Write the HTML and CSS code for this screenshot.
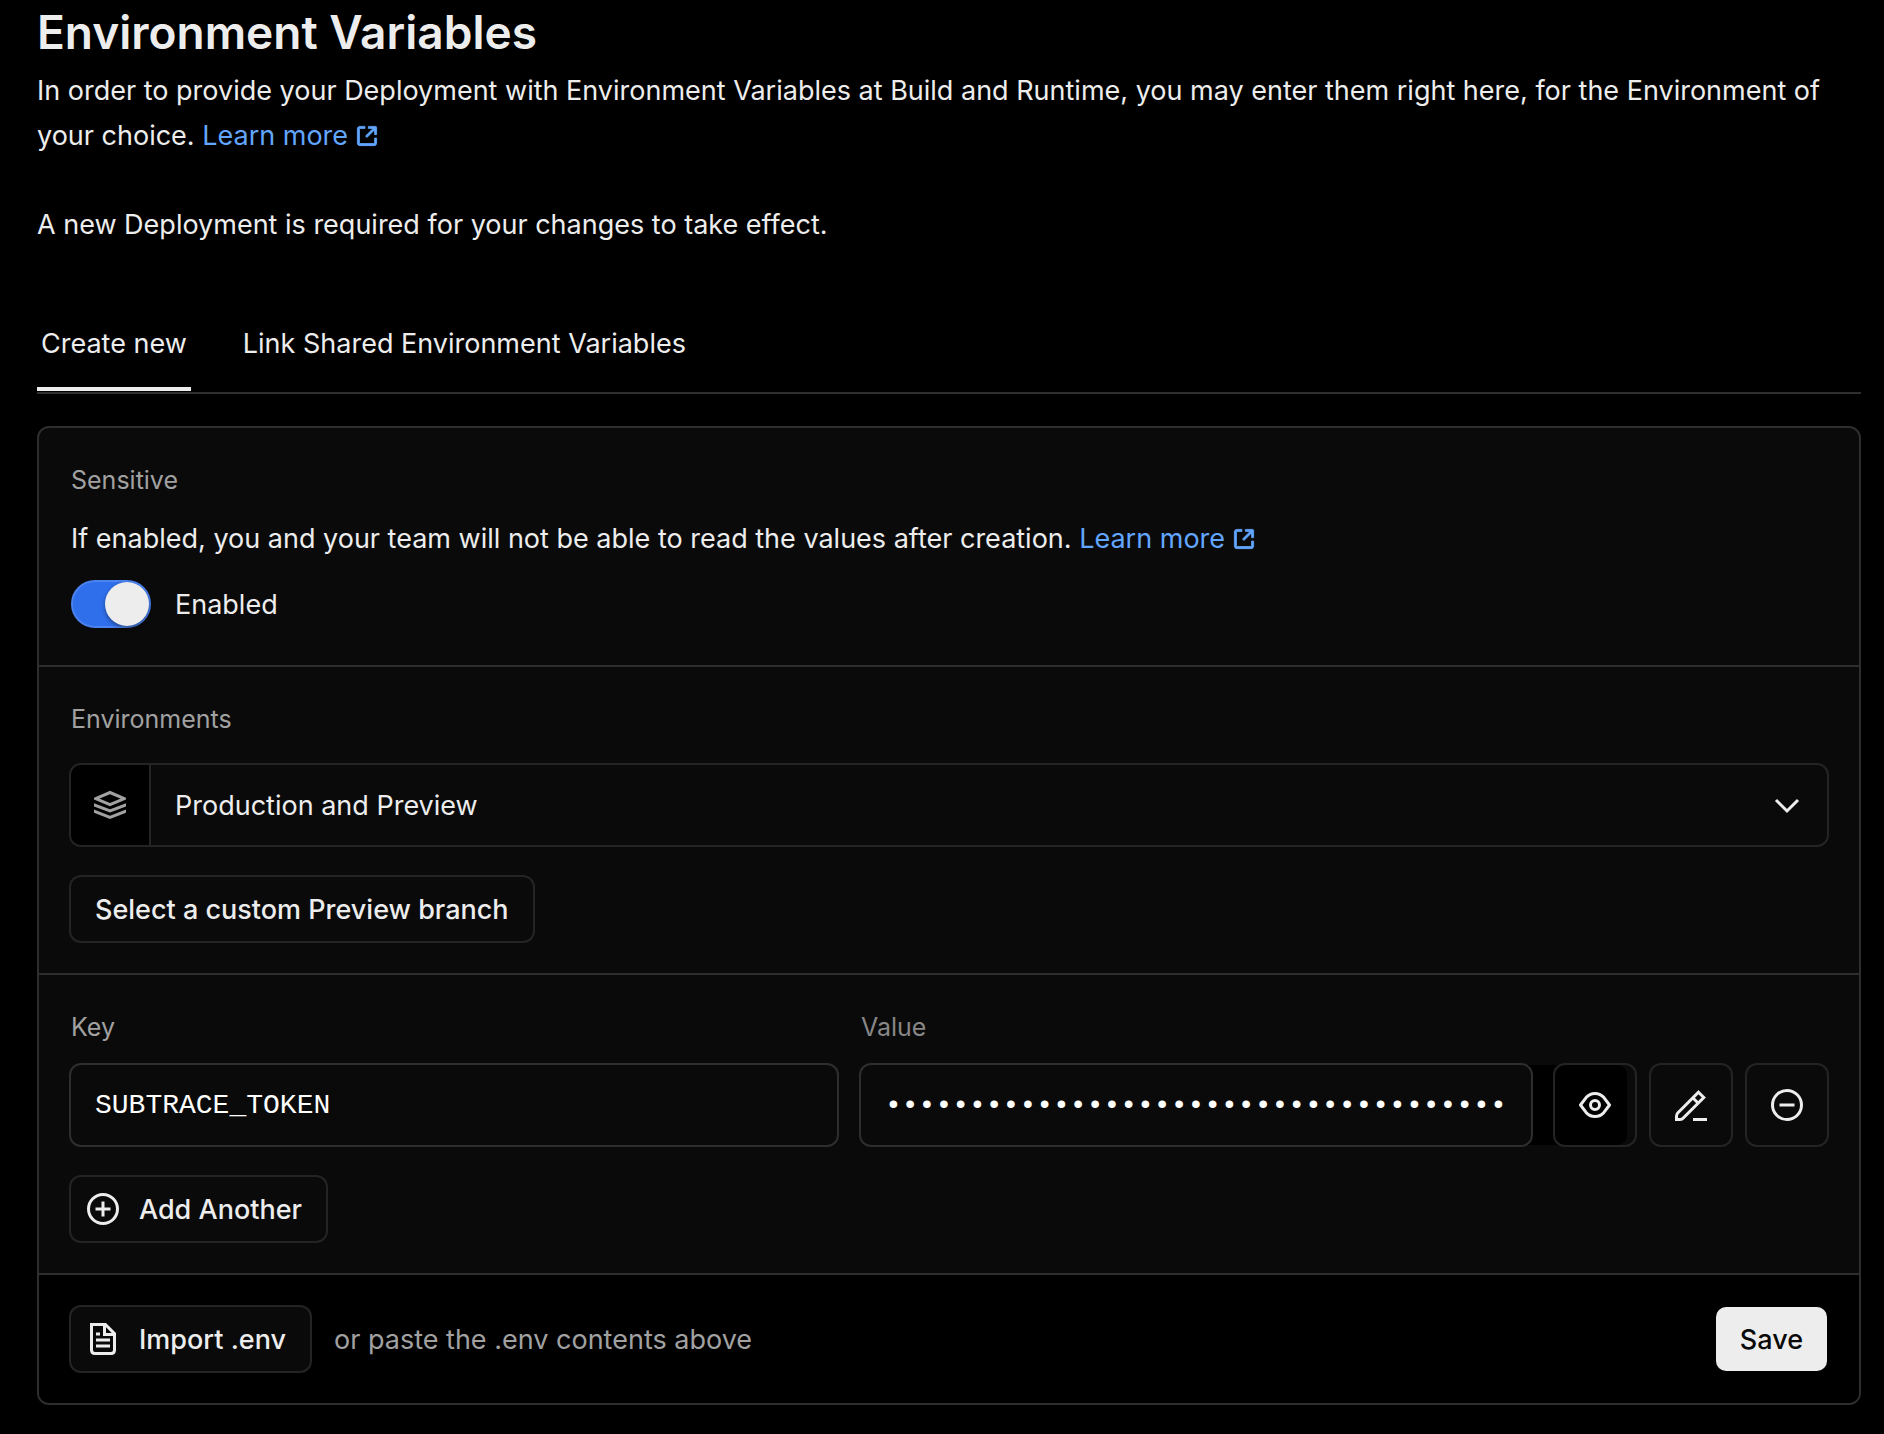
FILE: index.html
```html
<!DOCTYPE html>
<html lang="en">
<head>
<meta charset="utf-8">
<meta name="viewport" content="width=device-width, initial-scale=1">
<title>Environment Variables</title>
<link rel="stylesheet" href="styles.css">
</head>
<body>
<svg width="0" height="0" class="sprite" aria-hidden="true">
  <symbol id="external" viewBox="0 0 16 16"><path fill-rule="evenodd" clip-rule="evenodd" d="M13.5 10.25V13.25C13.5 13.3881 13.3881 13.5 13.25 13.5H2.75C2.61193 13.5 2.5 13.3881 2.5 13.25L2.5 2.75C2.5 2.61193 2.61193 2.5 2.75 2.5H5.75H6.5V1H5.75H2.75C1.7835 1 1 1.7835 1 2.75V13.25C1 14.2165 1.7835 15 2.75 15H13.25C14.2165 15 15 14.2165 15 13.25V10.25V9.5H13.5V10.25ZM9 1H9.75H14.2495C14.6637 1 14.9995 1.33579 14.9995 1.75V6.25V7H13.4995V6.25V3.56066L8.53033 8.52978L8 9.06011L6.93934 7.99945L7.46967 7.46912L12.4388 2.5H9.75H9V1Z"/></symbol>
</svg>
<main class="page">
  <header class="intro">
    <h1>Environment Variables</h1>
    <p>In order to provide your Deployment with Environment Variables at Build and Runtime, you may enter them right here, for the Environment of your choice. <a class="link" href="#docs">Learn more <svg class="ext"><use href="#external"/></svg></a></p>
    <p>A new Deployment is required for your changes to take effect.</p>
  </header>

  <nav class="tabs" aria-label="Variable source">
    <button type="button" class="tab tab-active">Create new</button>
    <button type="button" class="tab">Link Shared Environment Variables</button>
  </nav>

  <form class="card">
    <section class="section">
      <h2 class="label">Sensitive</h2>
      <p class="hint">If enabled, you and your team will not be able to read the values after creation. <a class="link" href="#sensitive">Learn more <svg class="ext"><use href="#external"/></svg></a></p>
      <label class="toggle"><input class="switch" type="checkbox" role="switch" checked>Enabled</label>
    </section>

    <section class="section">
      <label class="label label-spaced" for="environments">Environments</label>
      <div class="select">
        <span class="select-icon">
          <svg class="icon" viewBox="0 0 16 16" fill="none" stroke="currentColor" stroke-width="1.5"><path d="M8 1.750 15.200 4.800 8 7.850.8 4.800ZM-1 7.500 8 11 17 7.500M-1 10.700 8 14.200 17 10.700"/></svg>
        </span>
        <select id="environments"><option>Production and Preview</option></select>
        <svg class="icon chevron" viewBox="0 0 16 16" fill="none" stroke="currentColor" stroke-width="1.5"><path d="m2.5 5.5 5.5 5.5 5.5-5.5"/></svg>
      </div>
      <button type="button" class="button">Select a custom Preview branch</button>
    </section>

    <section class="section">
      <div class="pair">
        <div class="field">
          <label class="label" for="key">Key</label>
          <input class="input" id="key" type="text" value="SUBTRACE_TOKEN">
        </div>
        <div class="field">
          <label class="label label-dim" for="value">Value</label>
          <div class="secret">
            <input class="input" id="value" type="password" value="0000000000000000000000000000000000000">
            <button type="button" class="square reveal" aria-label="Show value"><svg class="icon" viewBox="0 0 16 16" fill="none" stroke="currentColor" stroke-width="1.5" stroke-linejoin="round"><path d="M.75 8 3.450 4.400C5.840 1.500 10.160 1.500 12.550 4.400L15.250 8 12.550 11.600C10.160 14.500 5.840 14.500 3.450 11.600Z"/><circle cx="8" cy="8" r="2.250"/></svg></button>
          </div>
        </div>
        <div class="actions">
          <button type="button" class="square" aria-label="Add note"><svg class="icon" viewBox="0 0 16 16" fill="none" stroke="currentColor" stroke-width="1.5"><path d="M11.750 1.600 14.400 4.250 4.400 14.250Q3.500 15.250 2.500 15.250H.75V13.500Q.75 12.500 1.750 11.600ZM9 4.500 11.500 7M9 15.250H16"/></svg></button>
          <button type="button" class="square" aria-label="Remove"><svg class="icon" viewBox="0 0 16 16" fill="none" stroke="currentColor" stroke-width="1.5"><circle cx="8" cy="8" r="7.250"/><path d="M4.250 8h7.500"/></svg></button>
        </div>
      </div>
      <button type="button" class="button button-icon"><svg class="icon" viewBox="0 0 16 16" fill="none" stroke="currentColor" stroke-width="1.5"><circle cx="8" cy="8" r="7.250"/><path d="M4.250 8h7.500M8 4.250v7.500"/></svg>Add Another</button>
    </section>

    <footer class="footer">
      <button type="button" class="button button-icon"><svg class="icon" viewBox="0 0 16 16" fill="none" stroke="currentColor" stroke-width="1.5"><path d="M2.250.75H9.200L13.750 5.300V13.500Q13.750 15.250 12 15.250H4Q2.250 15.250 2.250 13.500ZM8.750.75V5.750H13.750M4.500 5.500H6.500M4.500 8.500H11.500M4.500 11.500H11.500"/></svg>Import .env</button>
      <span class="note">or paste the .env contents above</span>
      <button type="submit" class="save">Save</button>
    </footer>
  </form>
</main>
</body>
</html>
```
FILE: styles.css
```css
:root {
  --bg: #000;
  --panel: #0a0a0a;
  --line: #2e2e2e;
  --ring: #242424;
  --text: #ededed;
  --muted: #a1a1a1;
  --link: #62a6ff;
}
* { box-sizing: border-box; }
body {
  margin: 0;
  background: var(--bg);
  color: var(--text);
  font: 400 27px/45px Inter, "Liberation Sans", sans-serif;
}
h1, h2, p { margin: 0; }
button, input, select { margin: 0; border: 0; font: inherit; color: inherit; }
button { cursor: pointer; }
.sprite { position: absolute; }
.page { padding: 0 23px 24px 37px; }

.intro h1 { font-size: 46px; font-weight: 600; line-height: 64px; padding-bottom: 4px; }
.intro p + p { margin-top: 44px; }
.link { color: var(--link); text-decoration: none; white-space: nowrap; }
.ext { width: 22px; height: 22px; fill: currentColor; stroke: currentColor; stroke-width: .6px; vertical-align: -2px; }

.tabs { display: flex; gap: 48px; margin-top: 60px; border-bottom: 2px solid var(--line); }
.tab { padding: 16px 4px 22px; background: none; line-height: 42px; border-bottom: 4px solid transparent; margin-bottom: 1px; }
.tab-active { border-color: var(--text); }

.card { margin-top: 32px; border: 2px solid var(--line); border-radius: 12px; background: var(--panel); overflow: hidden; }
.section { padding: 32px; border-bottom: 2px solid var(--line); }
.label { display: block; margin-bottom: 18px; font-size: 25px; font-weight: 400; line-height: 40px; color: var(--muted); }
.label-dim { color: #878787; }
.label-spaced { margin-bottom: 26px; }
.hint { margin: -2px 0 14px; }
.toggle { display: flex; align-items: center; gap: 24px; height: 58px; }
.switch {
  appearance: none;
  width: 80px;
  height: 48px;
  border: 2px solid #4a82f0;
  border-radius: 24px;
  background: #2f6feb;
}
.switch::before { content: ""; display: block; width: 44px; height: 44px; margin-left: auto; border-radius: 50%; background: var(--text); box-shadow: 0 2px 4px rgb(0 0 0 / 40%); }

.icon { flex: none; display: block; width: 32px; height: 32px; }
.select { display: flex; align-items: center; height: 80px; border-radius: 10px; box-shadow: 0 0 0 2px var(--ring); overflow: hidden; }
.select-icon { display: grid; place-items: center; width: 80px; height: 80px; border-right: 2px solid var(--ring); background: var(--bg); color: var(--muted); }
.select select { flex: 1; height: 80px; margin-right: -56px; padding: 0 80px 0 24px; appearance: none; background: transparent; }
.chevron { margin-right: 24px; pointer-events: none; }

.button, .square { border-radius: 10px; background: var(--panel); box-shadow: 0 0 0 2px var(--ring); }
.button { display: flex; align-items: center; height: 64px; padding: 0 24px; font-weight: 500; }
.button-icon { gap: 20px; padding-left: 16px; }
.section > .button { margin-top: 32px; }
.square { display: grid; place-items: center; width: 80px; height: 80px; padding: 0; }

.pair { display: grid; grid-template-columns: 1fr 1fr auto; align-items: end; gap: 24px; }
.field { min-width: 0; }
.input {
  display: block;
  width: 100%;
  min-width: 0;
  height: 80px;
  padding: 0 24px;
  border-radius: 10px;
  background: var(--panel);
  box-shadow: 0 0 0 2px var(--line);
  color: #fff;
  font: 28px/40px "Liberation Mono", monospace;
}
.secret { display: flex; border-radius: 10px; background: var(--bg); }
.secret .input { flex: 1; }
.reveal { flex: none; margin: 0 -8px 0 24px; background: transparent; }
.actions { display: flex; gap: 16px; }

.footer { display: flex; align-items: center; gap: 24px; padding: 32px; background: var(--bg); }
.note { color: var(--muted); }
.save { height: 64px; margin-left: auto; padding: 0 24px; border-radius: 10px; background: var(--text); color: #0a0a0a; font-weight: 500; }
```
